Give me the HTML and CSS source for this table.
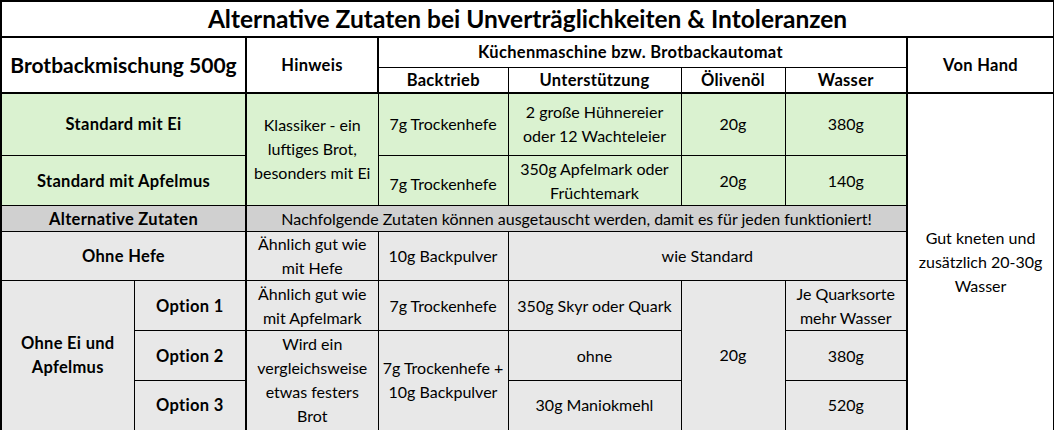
FILE: index.html
```html
<!DOCTYPE html>
<html lang="de">
<head>
<meta charset="utf-8">
<title>Alternative Zutaten</title>
<link rel="stylesheet" href="styles.css">
</head>
<body>
<table class="sheet">
  <colgroup>
    <col class="c-a"><col class="c-b"><col class="c-c"><col class="c-d">
    <col class="c-e"><col class="c-f"><col class="c-g"><col class="c-h">
  </colgroup>
  <tr class="r-title">
    <th colspan="8" class="title">Alternative Zutaten bei Unverträglichkeiten &amp; Intoleranzen</th>
  </tr>
  <tr class="r-h1">
    <th colspan="2" rowspan="2" class="hd box big">Brotbackmischung 500g</th>
    <th rowspan="2" class="hd box">Hinweis</th>
    <th colspan="4" class="hd group">Küchenmaschine bzw. Brotbackautomat</th>
    <th rowspan="2" class="hd box">Von Hand</th>
  </tr>
  <tr class="r-h2">
    <th class="hd sub first">Backtrieb</th>
    <th class="hd sub">Unterstützung</th>
    <th class="hd sub">Ölivenöl</th>
    <th class="hd sub last">Wasser</th>
  </tr>
  <tr class="r-std1 green">
    <th colspan="2" class="lbl sep">Standard mit Ei</th>
    <td rowspan="2">Klassiker - ein<br>luftiges Brot,<br>besonders mit Ei</td>
    <td>7g Trockenhefe</td>
    <td>2 große Hühnereier<br>oder 12 Wachteleier</td>
    <td>20g</td>
    <td>380g</td>
    <td rowspan="7" class="hand">Gut kneten und<br>zusätzlich 20-30g<br>Wasser</td>
  </tr>
  <tr class="r-std2 green">
    <th colspan="2" class="lbl sep">Standard mit Apfelmus</th>
    <td class="low">7g Trockenhefe</td>
    <td>350g Apfelmark oder<br>Früchtemark</td>
    <td>20g</td>
    <td>140g</td>
  </tr>
  <tr class="r-alt alt">
    <th colspan="2" class="lbl sep">Alternative Zutaten</th>
    <td colspan="5">Nachfolgende Zutaten können ausgetauscht werden, damit es für jeden funktioniert!</td>
  </tr>
  <tr class="r-hefe light">
    <th colspan="2" class="lbl sep">Ohne Hefe</th>
    <td>Ähnlich gut wie<br>mit Hefe</td>
    <td>10g Backpulver</td>
    <td colspan="3">wie Standard</td>
  </tr>
  <tr class="r-opt light">
    <th rowspan="3" class="lbl">Ohne Ei und<br>Apfelmus</th>
    <th class="lbl sep">Option 1</th>
    <td>Ähnlich gut wie<br>mit Apfelmark</td>
    <td>7g Trockenhefe</td>
    <td>350g Skyr oder Quark</td>
    <td rowspan="3">20g</td>
    <td>Je Quarksorte<br>mehr Wasser</td>
  </tr>
  <tr class="r-opt light">
    <th class="lbl sep">Option 2</th>
    <td rowspan="2">Wird ein<br>vergleichsweise<br>etwas festers<br>Brot</td>
    <td rowspan="2">7g Trockenhefe +<br>10g Backpulver</td>
    <td>ohne</td>
    <td>380g</td>
  </tr>
  <tr class="r-opt light">
    <th class="lbl sep">Option 3</th>
    <td>30g Maniokmehl</td>
    <td>520g</td>
  </tr>
</table>
</body>
</html>
```

FILE: styles.css
```css
html, body {
  margin: 0;
  padding: 0;
  background: #ffffff;
}

.sheet {
  border-collapse: collapse;
  table-layout: fixed;
  width: 1054px;
  border: 2px solid #000;
  font-family: Lato, "Liberation Sans", sans-serif;
  color: #000;
}

.c-a { width: 133px; }
.c-b { width: 112px; }
.c-c { width: 132px; }
.c-d { width: 130px; }
.c-e { width: 173px; }
.c-f { width: 104px; }
.c-g { width: 122px; }
.c-h { width: 147px; }

.sheet th,
.sheet td {
  border: 1px solid #000;
  padding: 0 2px;
  text-align: center;
  vertical-align: middle;
  font-size: 16px;
  line-height: 24px;
  font-weight: 400;
  white-space: nowrap;
}

.sheet th.lbl,
.sheet th.hd {
  font-weight: 700;
  font-size: 16.5px;
  letter-spacing: 0.3px;
}

.r-title { height: 36px; }
.r-h1 { height: 30px; }
.r-h2 { height: 25px; }
.r-std1 { height: 63px; }
.r-std2 { height: 50px; }
.r-alt { height: 26px; }
.r-hefe { height: 48px; }
.r-opt { height: 50px; }

.sheet th.title {
  font-size: 24.5px;
  font-weight: 700;
  border-bottom: 2px solid #000;
}

.sheet th.box {
  border: 2px solid #000;
}

.sheet th.big {
  font-size: 21px;
  letter-spacing: 0;
}

.sheet th.group {
  border: 2px solid #000;
  border-bottom: 1px solid #000;
  padding-right: 26px;
}

.sheet th.sub {
  border-bottom: 2px solid #000;
}

.sheet th.first {
  border-left: 2px solid #000;
}

.sheet th.last {
  border-right: 2px solid #000;
}

.sheet .sep {
  border-right: 2px solid #000;
}

.sheet td.hand {
  border-left: 2px solid #000;
  background: #ffffff;
}

.sheet td.low {
  padding-top: 6px;
}

.green th, .green td { background: #daf2d0; }
.alt th, .alt td { background: #d0d0d0; }
.light th, .light td { background: #e8e8e8; }
```
